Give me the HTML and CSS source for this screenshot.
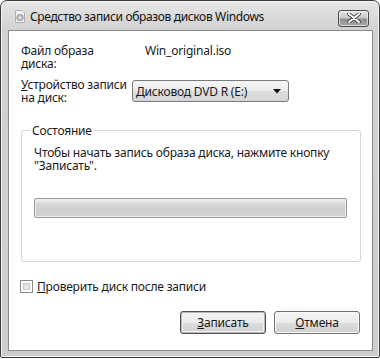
FILE: index.html
```html
<!DOCTYPE html>
<html lang="ru">
<head>
<meta charset="utf-8">
<link rel="stylesheet" href="styles.css">
</head>
<body>
<div class="window">
  <div class="titlebar">
    <svg class="app-icon" width="12" height="13" viewBox="0 0 12 13">
      <path d="M1.5 0.5 H8 L10.5 3 V12.5 H1.5 Z" fill="#f4f4f4" stroke="#b0b0b0"/>
      <circle cx="6" cy="7.5" r="3.6" fill="#9a9a9a"/>
      <circle cx="6" cy="7.5" r="2.6" fill="#c4c4c4"/>
      <circle cx="6" cy="7.5" r="0.9" fill="#f4f4f4"/>
    </svg>
    <span class="title">Средство записи образов дисков Windows</span>
    <div class="close">
      <svg width="14" height="10" viewBox="0 0 14 10">
        <path d="M2 1 L12 9 M12 1 L2 9" stroke="#3a3a3a" stroke-width="3.6" stroke-linecap="round"/>
        <path d="M2 1 L12 9 M12 1 L2 9" stroke="#ffffff" stroke-width="2" stroke-linecap="round"/>
      </svg>
    </div>
  </div>
  <div class="client">
    <div class="row row-file">
      <div class="label">Файл образа<br>диска:</div>
      <div class="value">Win_original.iso</div>
    </div>
    <div class="row row-device">
      <div class="label"><u>У</u>стройство записи<br>на диск:</div>
      <div class="select">
        <span>Дисковод DVD R (E:)</span>
        <svg width="8" height="5" viewBox="0 0 8 5"><path d="M0 0 H8 L4 4.5 Z" fill="#111"/></svg>
      </div>
    </div>
    <fieldset class="group">
      <legend>Состояние</legend>
      <p class="status">Чтобы начать запись образа диска, нажмите кнопку "Записать".</p>
      <div class="progress"></div>
    </fieldset>
    <label class="check">
      <span class="box"></span>
      <span><u>П</u>роверить диск после записи</span>
    </label>
    <div class="buttons">
      <div class="btn default"><u>З</u>аписать</div>
      <div class="btn"><u>О</u>тмена</div>
    </div>
  </div>
</div>
</body>
</html>
```

FILE: styles.css
```css
* { box-sizing: border-box; }
html, body { margin: 0; padding: 0; background: #ffffff; }
body {
  font-family: "Noto Sans", "Open Sans", sans-serif;
  font-size: 12px;
  letter-spacing: -0.2px;
  color: #1a1a1a;
}
u { text-decoration: underline; text-underline-offset: 1px; }

.window {
  width: 380px;
  height: 358px;
  border: 1px solid #3c3c3c;
  border-radius: 7px 7px 2px 2px;
  background: linear-gradient(to bottom, #e6e6e6 0px, #d2d2d2 28px, #cdcdcd 100%);
  display: flex;
  flex-direction: column;
  padding: 0 6px 6px 7px;
  box-shadow: inset 0 0 0 1px #f4f4f4;
}

.titlebar {
  height: 29px;
  display: flex;
  align-items: center;
  padding-left: 6px;
  flex-shrink: 0;
}
.app-icon { margin-right: 4px; margin-top: 2px; }
.title {
  font-size: 12px;
  color: #111;
  letter-spacing: -0.35px;
  flex: 1;
  margin-top: 2px;
}
.close {
  width: 31px;
  height: 17px;
  margin-right: 4px;
  margin-top: 5px;
  border: 1px solid #4a4a4a;
  border-radius: 3px;
  background: linear-gradient(to bottom, #e8e8e8 0%, #c8c8c8 45%, #8e8e8e 55%, #a8a8a8 100%);
  display: flex;
  align-items: center;
  justify-content: center;
  box-shadow: inset 0 0 0 1px rgba(255,255,255,0.6);
}

.client {
  flex: 1;
  background: #ffffff;
  border: 1px solid #8a8a8a;
  padding: 13px 12px 0 12px;
  display: flex;
  flex-direction: column;
}

.row { display: flex; align-items: flex-start; }
.label { width: 124px; line-height: 13px; }
.row-file .value { line-height: 13px; }
.row-device { margin-top: 8px; align-items: center; }

.select {
  width: 157px;
  height: 22px;
  margin-left: -13px;
  border: 1px solid #7a7a7a;
  border-radius: 3px;
  background: linear-gradient(to bottom, #f6f6f6 0%, #ebebeb 50%, #dddddd 51%, #d6d6d6 100%);
  display: flex;
  align-items: center;
  justify-content: space-between;
  padding: 0 7px 0 3px;
}

.group {
  margin: 20px 0 0 0;
  padding: 0 12px 0 12px;
  height: 138px;
  border: 1px solid #d6d6d6;
  border-radius: 3px;
  width: 340px;
}
.group legend {
  padding: 0 2px;
  margin-left: -4px;
  line-height: 13px;
}
.status {
  margin: 9px 0 0 0;
  line-height: 13px;
}
.progress {
  margin-top: 26px;
  width: 313px;
  height: 20px;
  border: 1px solid #9a9a9a;
  border-radius: 2px;
  background: linear-gradient(to bottom, #f2f2f2 0%, #dadada 25%, #cdcdcd 60%, #d4d4d4 100%);
  box-shadow: inset 0 0 0 1px #ececec;
}

.check {
  display: flex;
  align-items: center;
  margin-top: 16px;
  margin-left: -1px;
}
.check .box {
  width: 13px;
  height: 13px;
  border: 1px solid #8a8a8a;
  background: linear-gradient(135deg, #d4d4d4, #f6f6f6);
  box-shadow: inset 0 0 0 2px #ffffff, inset 0 0 0 3px #c8c8c8;
  margin-right: 4px;
}

.buttons {
  display: flex;
  justify-content: flex-end;
  gap: 8px;
  margin-top: 16px;
}
.btn {
  width: 86px;
  height: 23px;
  border: 1px solid #707070;
  border-radius: 3px;
  background: linear-gradient(to bottom, #f4f4f4 0%, #ebebeb 50%, #dddddd 51%, #cfcfcf 100%);
  display: flex;
  align-items: center;
  justify-content: center;
  box-shadow: inset 0 0 0 1px #fbfbfb;
}
.btn.default {
  border-color: #4f4f4f;
  box-shadow: inset 0 0 0 1px #b8b8b8, inset 0 0 0 2px #f2f2f2;
}
```
